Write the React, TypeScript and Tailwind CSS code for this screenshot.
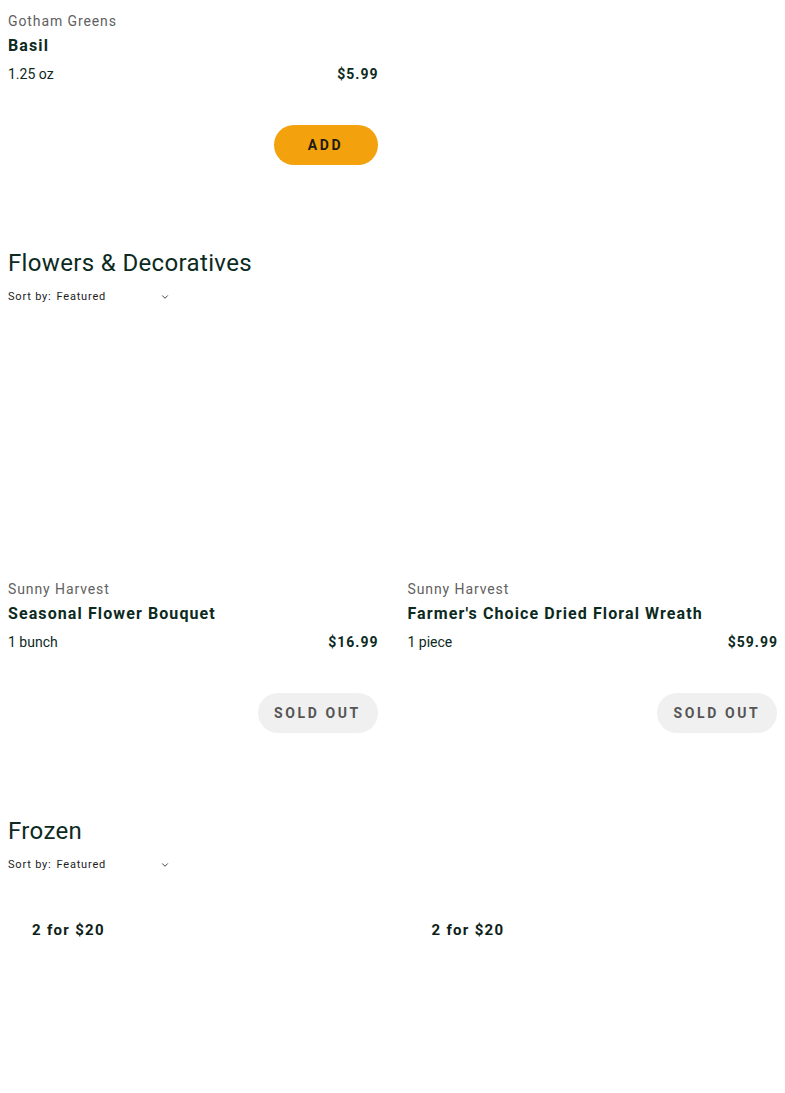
import { ChevronDown } from "lucide-react";

type Product = {
  brand: string;
  name: string;
  size: string;
  price: string;
  soldOut?: boolean;
  badge?: string;
};

const FONT = "font-['Roboto','Liberation_Sans',sans-serif]";

function SortBy() {
  return (
    <div className="mt-[10px] flex h-4 items-center text-[11px] tracking-[0.8px] text-[#1c1c1c]">
      <span>Sort by:</span>
      <span className="ml-[5px] w-[103px]">Featured</span>
      <ChevronDown className="h-[10px] w-[10px] text-[#222]" strokeWidth={2} />
    </div>
  );
}

function ProductCard({ item, imageH }: { item: Product; imageH: string }) {
  return (
    <div className="flex flex-col">
      <div className={`relative ${imageH}`}>
        {item.badge && (
          <span className="absolute left-4 top-4 px-2 text-[15px] font-bold leading-[18px] tracking-[1.3px] text-[#0d2118]">
            {item.badge}
          </span>
        )}
      </div>
      {item.name && (
        <>
          <div className="mt-1 text-sm leading-5 tracking-[0.9px] text-[#616161]">{item.brand}</div>
          <div className="mt-[3px] text-base font-bold leading-6 tracking-[1.1px] text-[#0c2a1e]">{item.name}</div>
          <div className="mt-[6px] flex items-center justify-between text-sm leading-5 text-[#0c2a1e]">
            <span>{item.size}</span>
            <span className="-mr-px font-bold tracking-[1px]">{item.price}</span>
          </div>
          <div className="mt-[41px] flex justify-end">
            {item.soldOut ? (
              <button className="h-10 w-[120px] rounded-full bg-[#f0f0f0] text-sm font-bold tracking-[2.6px] text-[#555]">
                SOLD OUT
              </button>
            ) : (
              <button className="h-10 w-[104px] rounded-full bg-[#f3a20d] text-sm font-bold tracking-[2.6px] text-[#1d1a12]">
                ADD
              </button>
            )}
          </div>
        </>
      )}
    </div>
  );
}

const flowers: Product[] = [
  { brand: "Sunny Harvest", name: "Seasonal Flower Bouquet", size: "1 bunch", price: "$16.99", soldOut: true },
  { brand: "Sunny Harvest", name: "Farmer's Choice Dried Floral Wreath", size: "1 piece", price: "$59.99", soldOut: true },
];

const frozen: Product[] = [
  { brand: "", name: "", size: "", price: "", badge: "2 for $20" },
  { brand: "", name: "", size: "", price: "", badge: "2 for $20" },
];

export default function App() {
  return (
    <div className={`h-[1093px] overflow-hidden bg-white px-2 ${FONT}`}>
      {/* tail of the previous section */}
      <div className="grid grid-cols-2 gap-x-[30px]">
        <ProductCard
          item={{ brand: "Gotham Greens", name: "Basil", size: "1.25 oz", price: "$5.99" }}
          imageH="h-[7px]"
        />
      </div>

      <section className="mt-[82px]">
        <h2 className="text-2xl leading-8 tracking-[0.35px] text-[#0c2a1e]">Flowers &amp; Decoratives</h2>
        <SortBy />
        <div className="mt-[31px] grid grid-cols-2 gap-x-[30px]">
          {flowers.map((p) => (
            <ProductCard key={p.name} item={p} imageH="h-[239px]" />
          ))}
        </div>
      </section>

      <section className="mt-[82px]">
        <h2 className="text-2xl leading-8 tracking-[0.35px] text-[#0c2a1e]">Frozen</h2>
        <SortBy />
        <div className="mt-[32px] grid grid-cols-2 gap-x-[30px]">
          {frozen.map((p, i) => (
            <ProductCard key={i} item={p} imageH="h-[239px]" />
          ))}
        </div>
      </section>
    </div>
  );
}
